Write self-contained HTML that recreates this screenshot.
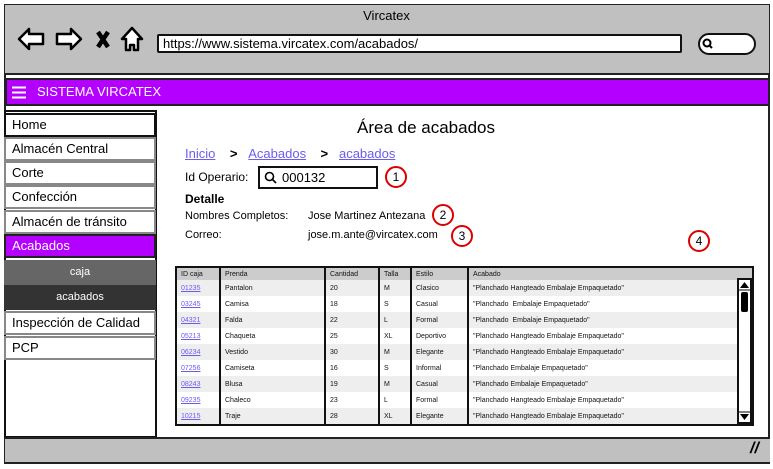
<!DOCTYPE html>
<html><head><meta charset="utf-8"><style>
*{box-sizing:border-box;margin:0;padding:0}
body{width:773px;height:469px;background:#fff;position:relative;overflow:hidden;font-family:"Liberation Sans",sans-serif;color:#000}
.a{position:absolute}
.frame{left:4px;top:4px;width:766px;height:460px;border:2px solid #222;background:#fff}
.tb{left:5px;top:5px;width:764px;height:70px;background:#c0c0c0;border-bottom:2px solid #222}
.nav{left:5px;top:78px;width:765px;height:28px;background:#b300ff;border:2px solid #222;color:#fff;font-size:13px;line-height:24px;padding-left:30px}
.si{left:4px;width:152px;height:24px;border:2px solid #888;font-size:13px;line-height:20px;padding-left:6px;background:#fff}
.sub{left:4px;width:152px;height:25px;color:#fff;font-size:11px;line-height:25px;text-align:center}
.lk{color:#6a5cf0;text-decoration:underline}
.circ{width:22px;height:22px;border:2px solid #d00;border-radius:50%;font-size:12px;text-align:center;line-height:18px}
table{border-collapse:collapse;font-size:7px;color:#111}
td{height:16px;padding-left:4px;border-right:2px solid #111;white-space:nowrap}
tr:nth-child(even) td{background:#eee}
th{height:12px;background:#ccc;text-align:left;font-weight:normal;padding-left:4px;border-right:2px solid #111}
td.id{color:#6a5cf0;text-decoration:underline}
</style></head><body>
<div class="a frame"></div>
<div class="a tb"></div>
<div class="a" style="left:0;top:8px;width:773px;text-align:center;font-size:13px">Vircatex</div>
<svg class="a" style="left:15px;top:24px" width="135" height="30" viewBox="0 0 135 30">
<path d="M4 15 L14 5 L14 10 L28 10 L28 20 L14 20 L14 25 Z" fill="#fff" stroke="#000" stroke-width="2.5" stroke-linejoin="round"/>
<path d="M66 15 L56 5 L56 10 L42 10 L42 20 L56 20 L56 25 Z" fill="#fff" stroke="#000" stroke-width="2.5" stroke-linejoin="round"/>
<path d="M83 8 L93 23 M93 8 L83 23" stroke="#000" stroke-width="4.5"/>
<path d="M117 4 L107 15 L111 15 L111 26 L115 26 L115 21 L119 21 L119 26 L123 26 L123 15 L127 15 Z" fill="#fff" stroke="#000" stroke-width="2.5" stroke-linejoin="round"/>
</svg>
<div class="a" style="left:157px;top:34px;width:525px;height:19px;border:2px solid #111;background:#fff;border-radius:2px;font-size:13px;line-height:15px;padding-left:4px">https://www.sistema.vircatex.com/acabados/</div>
<div class="a" style="left:698px;top:33px;width:58px;height:22px;border:2px solid #111;background:#fff;border-radius:11px"></div>
<svg class="a" style="left:702px;top:38px" width="12" height="12"><circle cx="5" cy="5" r="3.5" fill="none" stroke="#000" stroke-width="2"/><path d="M7 7 L10 10" stroke="#000" stroke-width="2"/></svg>
<div class="a nav">SISTEMA VIRCATEX</div>
<svg class="a" style="left:12px;top:86px" width="14" height="13"><path d="M0 1.5H14M0 6.5H14M0 11.5H14" stroke="#fff" stroke-width="2"/></svg>
<div class="a" style="left:4px;top:110px;width:153px;height:328px;border:2px solid #111;background:#fff"></div>
<div class="a si" style="top:113px;border-color:#111">Home</div>
<div class="a si" style="top:137px">Almacén Central</div>
<div class="a si" style="top:161px">Corte</div>
<div class="a si" style="top:185px">Confección</div>
<div class="a si" style="top:210px">Almacén de tránsito</div>
<div class="a si" style="top:234px;background:#b300ff;color:#fff;border-color:#222">Acabados</div>
<div class="a sub" style="top:260px;background:#666">caja</div>
<div class="a sub" style="top:285px;background:#333">acabados</div>
<div class="a si" style="top:311px">Inspección de Calidad</div>
<div class="a si" style="top:336px">PCP</div>
<div class="a" style="left:5px;top:437px;width:765px;height:27px;background:#c0c0c0;border-top:2px solid #222;border-bottom:2px solid #222"></div>
<div class="a" style="left:750px;top:440px;font-size:16px;font-weight:bold;font-style:italic">//</div>
<div class="a" style="left:357px;top:118px;font-size:17px">Área de acabados</div>
<div class="a" style="left:185px;top:146px;font-size:13px"><span class="lk">Inicio</span>&nbsp;&nbsp;&nbsp; <b>&gt;</b> &nbsp;&nbsp;<span class="lk">Acabados</span>&nbsp;&nbsp;&nbsp; <b>&gt;</b> &nbsp;&nbsp;<span class="lk">acabados</span></div>
<div class="a" style="left:185px;top:170px;font-size:12px">Id Operario:</div>
<div class="a" style="left:258px;top:166px;width:120px;height:23px;border:2px solid #111;font-size:13px;line-height:19px;padding-left:22px">000132</div>
<svg class="a" style="left:264px;top:171px" width="13" height="13"><circle cx="5.5" cy="5.5" r="4" fill="none" stroke="#000" stroke-width="1.6"/><path d="M8.5 8.5 L12 12" stroke="#000" stroke-width="1.6"/></svg>
<div class="a circ" style="left:385px;top:166px">1</div>
<div class="a" style="left:185px;top:192px;font-size:12px;font-weight:bold">Detalle</div>
<div class="a" style="left:185px;top:210px;font-size:11px">Nombres Completos:</div>
<div class="a" style="left:308px;top:210px;font-size:11px">Jose Martinez Antezana</div>
<div class="a circ" style="left:432px;top:204px">2</div>
<div class="a" style="left:185px;top:229px;font-size:11px">Correo:</div>
<div class="a" style="left:308px;top:229px;font-size:11px">jose.m.ante@vircatex.com</div>
<div class="a circ" style="left:451px;top:225px">3</div>
<div class="a circ" style="left:688px;top:230px">4</div>
<div class="a" style="left:175px;top:266px;width:579px;height:160px;border:2px solid #111;overflow:hidden;background:#fff">
<table style="width:575px">
<tr><th style="width:43px">ID caja</th><th style="width:105px">Prenda</th><th style="width:54px">Cantidad</th><th style="width:32px">Talla</th><th style="width:57px">Estilo</th><th style="border-right:0">Acabado</th></tr>
<tr><td class="id">01235</td><td>Pantalon</td><td>20</td><td>M</td><td>Clasico</td><td style="border:0">"Planchado Hangteado Embalaje Empaquetado"</td></tr>
<tr><td class="id">03245</td><td>Camisa</td><td>18</td><td>S</td><td>Casual</td><td style="border:0">"Planchado&nbsp; Embalaje Empaquetado"</td></tr>
<tr><td class="id">04321</td><td>Falda</td><td>22</td><td>L</td><td>Formal</td><td style="border:0">"Planchado&nbsp; Embalaje Empaquetado"</td></tr>
<tr><td class="id">05213</td><td>Chaqueta</td><td>25</td><td>XL</td><td>Deportivo</td><td style="border:0">"Planchado Hangteado Embalaje Empaquetado"</td></tr>
<tr><td class="id">06234</td><td>Vestido</td><td>30</td><td>M</td><td>Elegante</td><td style="border:0">"Planchado Hangteado Embalaje Empaquetado"</td></tr>
<tr><td class="id">07256</td><td>Camiseta</td><td>16</td><td>S</td><td>Informal</td><td style="border:0">"Planchado Embalaje Empaquetado"</td></tr>
<tr><td class="id">08243</td><td>Blusa</td><td>19</td><td>M</td><td>Casual</td><td style="border:0">"Planchado Embalaje Empaquetado"</td></tr>
<tr><td class="id">09235</td><td>Chaleco</td><td>23</td><td>L</td><td>Formal</td><td style="border:0">"Planchado Hangteado Embalaje Empaquetado"</td></tr>
<tr><td class="id">10215</td><td>Traje</td><td>28</td><td>XL</td><td>Elegante</td><td style="border:0">"Planchado Hangteado Embalaje Empaquetado"</td></tr>
</table>
</div>
<div class="a" style="left:737px;top:278px;width:15px;height:146px;border:2px solid #111;background:#fff"></div>
<svg class="a" style="left:737px;top:278px" width="15" height="146"><path d="M3 10 L7.5 4 L12 10Z" fill="#000"/><rect x="4" y="14" width="7" height="20" rx="2" fill="#000"/><path d="M3 136 L7.5 142 L12 136Z" fill="#000"/><path d="M2 12H13M2 134H13" stroke="#000" stroke-width="1"/></svg>
</body></html>
